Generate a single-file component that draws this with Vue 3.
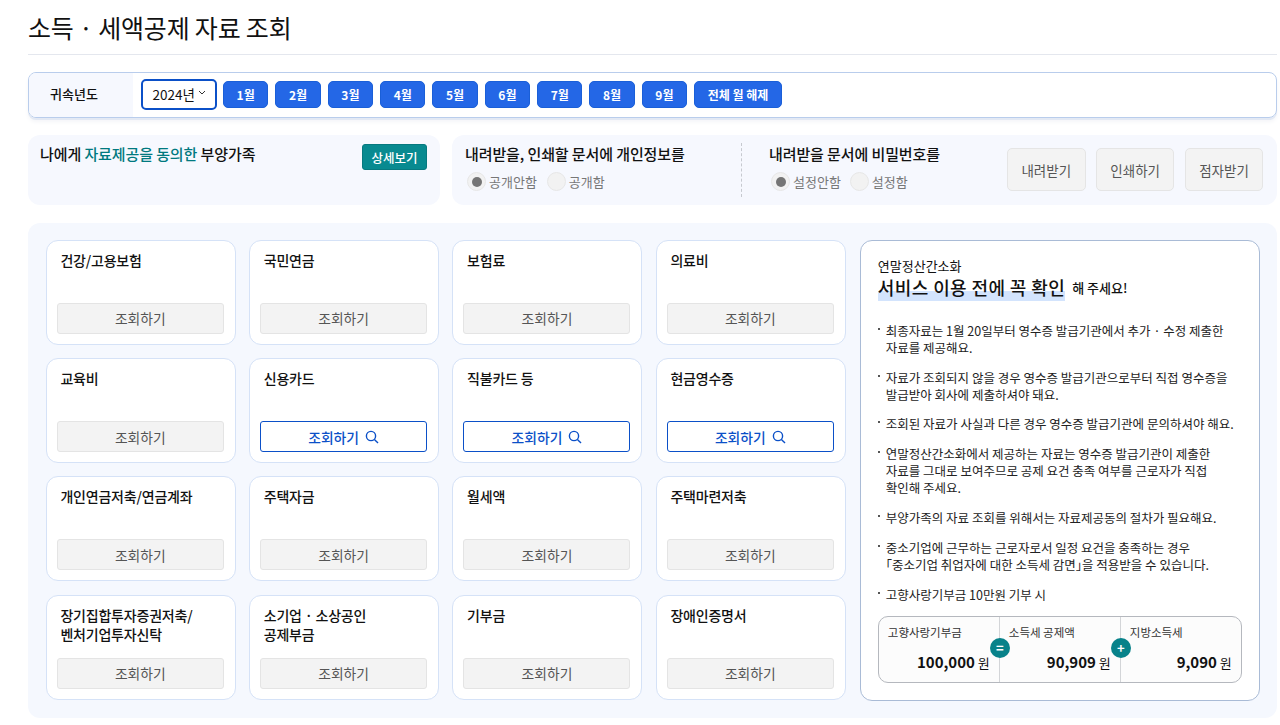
<script setup>
const months = ['1월','2월','3월','4월','5월','6월','7월','8월','9월']
const cards = [
  { name: '건강/고용보험' }, { name: '국민연금' }, { name: '보험료' }, { name: '의료비' },
  { name: '교육비' }, { name: '신용카드', active: true }, { name: '직불카드 등', active: true }, { name: '현금영수증', active: true },
  { name: '개인연금저축/연금계좌' }, { name: '주택자금' }, { name: '월세액' }, { name: '주택마련저축' },
  { name: '장기집합투자증권저축/\n벤처기업투자신탁' }, { name: '소기업 · 소상공인\n공제부금' }, { name: '기부금' }, { name: '장애인증명서' }
]
const notes = [
  '최종자료는 1월 20일부터 영수증 발급기관에서 추가 · 수정 제출한 자료를 제공해요.',
  '자료가 조회되지 않을 경우 영수증 발급기관으로부터 직접 영수증을 발급받아 회사에 제출하셔야 돼요.',
  '조회된 자료가 사실과 다른 경우 영수증 발급기관에 문의하셔야 해요.',
  '연말정산간소화에서 제공하는 자료는 영수증 발급기관이 제출한 자료를 그대로 보여주므로 공제 요건 충족 여부를 근로자가 직접 확인해 주세요.',
  '부양가족의 자료 조회를 위해서는 자료제공동의 절차가 필요해요.',
  '중소기업에 근무하는 근로자로서 일정 요건을 충족하는 경우 ｢중소기업 취업자에 대한 소득세 감면｣을 적용받을 수 있습니다.',
  '고향사랑기부금 10만원 기부 시'
]
const sums = [
  { label: '고향사랑기부금', value: '100,000', op: '=' },
  { label: '소득세 공제액', value: '90,909', op: '+' },
  { label: '지방소득세', value: '9,090' }
]
</script>

<template>
  <div class="page">
    <h1 class="title">소득 · 세액공제 자료 조회</h1>

    <div class="yearbar">
      <div class="yearlabel">귀속년도</div>
      <div class="yearctrl">
        <div class="select">2024년
          <svg width="8" height="5" viewBox="0 0 8 5"><path d="M1 1l3 3 3-3" fill="none" stroke="#333" stroke-width="1"/></svg>
        </div>
        <button v-for="m in months" :key="m" class="month">{{ m }}</button>
        <button class="month clear">전체 월 해제</button>
      </div>
    </div>

    <div class="options">
      <section class="family">
        <p class="opt-title">나에게 <em>자료제공을 동의한</em> 부양가족</p>
        <button class="detail">상세보기</button>
      </section>
      <section class="docs">
        <div class="docopt first">
          <p class="opt-title">내려받을, 인쇄할 문서에 개인정보를</p>
          <div class="radios">
            <span class="radio on"></span><span class="rlabel">공개안함</span>
            <span class="radio"></span><span class="rlabel">공개함</span>
          </div>
        </div>
        <div class="docopt second">
          <p class="opt-title">내려받을 문서에 비밀번호를</p>
          <div class="radios">
            <span class="radio on"></span><span class="rlabel">설정안함</span>
            <span class="radio"></span><span class="rlabel">설정함</span>
          </div>
        </div>
        <div class="actions">
          <button class="action">내려받기</button>
          <button class="action">인쇄하기</button>
          <button class="action">점자받기</button>
        </div>
      </section>
    </div>

    <main class="board">
      <div class="cards">
        <article v-for="c in cards" :key="c.name" class="card">
          <h2 class="card-name">{{ c.name }}</h2>
          <button class="query" :class="{ active: c.active }">
            조회하기
            <svg v-if="c.active" width="14" height="14" viewBox="0 0 14 14" fill="none" stroke="#0b50c8" stroke-width="1.4"><circle cx="6" cy="6" r="4.6"/><path d="M9.4 9.4L13 13"/></svg>
          </button>
        </article>
      </div>
      <aside class="guide">
        <div class="guide-sub">연말정산간소화</div>
        <div class="guide-head"><strong>서비스 이용 전에 꼭 확인</strong><span>해 주세요!</span></div>
        <ul class="notes">
          <li v-for="n in notes" :key="n">{{ n }}</li>
        </ul>
        <div class="sums">
          <div v-for="s in sums" :key="s.label" class="sum">
            <div class="sum-label">{{ s.label }}</div>
            <div class="sum-value"><b>{{ s.value }}</b> 원</div>
            <span v-if="s.op" class="op">{{ s.op }}</span>
          </div>
        </div>
      </aside>
    </main>
  </div>
</template>

<style>
html, body { margin: 0; background: #fff; }
</style>

<style scoped>
.page {
  box-sizing: border-box;
  width: 1280px;
  height: 725px;
  padding: 0 3px 0 28px;
  overflow: hidden;
  font-family: "Noto Sans CJK KR", "Noto Sans", sans-serif;
  color: #111;
}
button { font-family: inherit; cursor: pointer; padding: 0; }
p, h1, h2, ul { margin: 0; padding: 0; }

.title {
  height: 55px;
  box-sizing: border-box;
  border-bottom: 1px solid #e4e7ee;
  font-size: 25px;
  font-weight: 400;
  line-height: 55px;
  letter-spacing: -0.2px;
}

.yearbar {
  display: flex;
  height: 46px;
  box-sizing: border-box;
  margin-top: 17px;
  border: 1px solid #b9cdec;
  border-radius: 8px;
  box-shadow: 0 2px 0 #e3e9f4, 0 4px 4px #f4f5f8;
  overflow: hidden;
}
.yearlabel {
  width: 104px;
  flex: none;
  background: #f6f8fe;
  font-size: 13px;
  font-weight: 500;
  line-height: 42px;
  text-indent: 21px;
}
.yearctrl { display: flex; align-items: center; gap: 7px; padding: 0 0 2px 8px; }
.select {
  display: flex;
  align-items: center;
  gap: 3px;
  box-sizing: border-box;
  width: 76px;
  height: 31px;
  padding-left: 9.5px;
  margin-right: -1px;
  border: 2px solid #0b50c8;
  border-radius: 5px;
  font-size: 13.5px;
  background: #fff;
}
.select svg { margin-top: -3px; }
.month {
  width: 45.35px;
  height: 27px;
  border: 1px solid #1a5fd8;
  border-radius: 5px;
  background: #2467e6;
  color: #fff;
  font-size: 12px;
  font-weight: 700;
}
.month.clear { width: 88px; }

.options { display: flex; gap: 12px; margin-top: 17px; }
.family, .docs { height: 70px; border-radius: 12px; background: #f6f8fe; box-sizing: border-box; }
.family {
  width: 412px;
  display: flex;
  justify-content: space-between;
  padding: 9px 13px 0 12px;
}
.opt-title { font-size: 15px; font-weight: 500; line-height: 20px; letter-spacing: -0.1px; }
.opt-title em { font-style: normal; color: #00797f; }
.detail {
  width: 65px;
  height: 26px;
  border: 1px solid #07797f;
  border-radius: 3px;
  background: #088a90;
  color: #fff;
  font-size: 12.5px;
  font-weight: 500;
}
.docs { flex: 1; display: flex; align-items: stretch; }
.docopt { padding-top: 9px; }
.docopt.first { width: 290px; padding-left: 13px; box-sizing: border-box; position: relative; }
.docopt.first::after {
  content: "";
  position: absolute;
  right: 0;
  top: 8px;
  bottom: 8px;
  border-right: 1px dashed #c6c9cf;
}
.docopt.second { width: 265px; padding-left: 27px; box-sizing: border-box; }
.radios { display: flex; align-items: center; margin-top: 8px; padding-left: 2px; }
.radio {
  box-sizing: border-box;
  width: 19px;
  height: 19px;
  border: 1px solid #e7e7e7;
  border-radius: 50%;
  background: #f2f2f2;
  position: relative;
}
.radio.on::after {
  content: "";
  position: absolute;
  left: 3.5px;
  top: 3.5px;
  width: 10px;
  height: 10px;
  border-radius: 50%;
  background: #757575;
}
.rlabel { font-size: 13px; color: #777; margin: 0 3px 0 3px; }
.radio + .rlabel { margin-right: 9px; }
.first .radio + .rlabel { margin-right: 10px; }
.actions { display: flex; gap: 10.4px; padding-top: 13px; }
.action {
  width: 78.5px;
  height: 43px;
  border: 1px solid #e5e5e5;
  border-radius: 5px;
  background: #f3f3f3;
  color: #555;
  font-size: 13.5px;
}

.board {
  display: flex;
  gap: 14px;
  height: 495px;
  margin-top: 18px;
  padding: 16.8px 17px 17px 17.8px;
  box-sizing: border-box;
  border-radius: 12px;
  background: #f5f8fe;
}
.cards {
  width: 800px;
  display: grid;
  grid-template-columns: repeat(4, 190px);
  grid-template-rows: repeat(4, 105px);
  gap: 13.33px;
  flex: none;
}
.card {
  box-sizing: border-box;
  display: flex;
  flex-direction: column;
  justify-content: space-between;
  padding: 10px 11px 10px 10px;
  background: #fff;
  border: 1px solid #d5e2f7;
  border-radius: 12px;
}
.card-name {
  padding-left: 3.6px;
  font-size: 14px;
  font-weight: 500;
  line-height: 19px;
  letter-spacing: -0.2px;
  white-space: pre-line;
}
.query {
  display: flex;
  align-items: center;
  justify-content: center;
  gap: 6px;
  height: 31px;
  flex: none;
  border: 1px solid #e4e4e4;
  border-radius: 3px;
  background: #f3f3f3;
  color: #555;
  font-size: 13.8px;
  line-height: 27px;
  padding-top: 1px;
  box-sizing: border-box;
}
.query.active { background: #fff; border-color: #0b50c8; color: #0b50c8; font-weight: 500; }

.guide {
  box-sizing: border-box;
  width: 400px;
  height: 461px;
  padding: 17px 17px 0 17px;
  background: #fff;
  border: 1px solid #a9bbd6;
  border-radius: 12px;
}
.guide-sub { font-size: 13px; line-height: 16px; }
.guide-head { display: flex; align-items: flex-end; gap: 7px; margin-top: 1px; }
.guide-head strong {
  font-size: 18px;
  font-weight: 500;
  line-height: 24px;
  letter-spacing: 0.4px;
  padding-bottom: 2px;
  margin-bottom: -2px;
  background: linear-gradient(transparent 16px, #d3e4fd 16px);
}
.guide-head span { font-size: 13px; font-weight: 500; line-height: 22px; }
.notes { list-style: none; margin-top: 23px; }
.notes li {
  position: relative;
  width: 360px;
  padding-left: 8px;
  margin-bottom: 12.85px;
  font-size: 12.5px;
  line-height: 17px;
  color: #222;
  box-sizing: border-box;
  word-break: keep-all;
}
.notes li::before {
  content: "";
  position: absolute;
  left: 0;
  top: 6px;
  width: 2px;
  height: 2px;
  background: #555;
}
.sums {
  display: flex;
  width: 364px;
  height: 67px;
  box-sizing: border-box;
  margin-top: 1px;
  border: 1px solid #b5b8be;
  border-radius: 10px;
  background: #fcfcfc;
}
.sum {
  flex: 1;
  position: relative;
  padding: 7px 9px 0 9px;
  border-right: 1px solid #d3d5d8;
}
.sum:last-child { border-right: 0; }
.sum-label { font-size: 11.5px; line-height: 16px; color: #333; }
.sum-value { margin-top: 12px; text-align: right; font-size: 13px; line-height: 20px; }
.sum-value b { font-size: 15px; font-weight: 700; }
.op {
  position: absolute;
  right: -11px;
  top: 21px;
  z-index: 1;
  width: 20px;
  height: 20px;
  border-radius: 50%;
  background: #08828a;
  color: #fff;
  font-size: 13px;
  font-weight: 700;
  line-height: 20px;
  text-align: center;
}
</style>
